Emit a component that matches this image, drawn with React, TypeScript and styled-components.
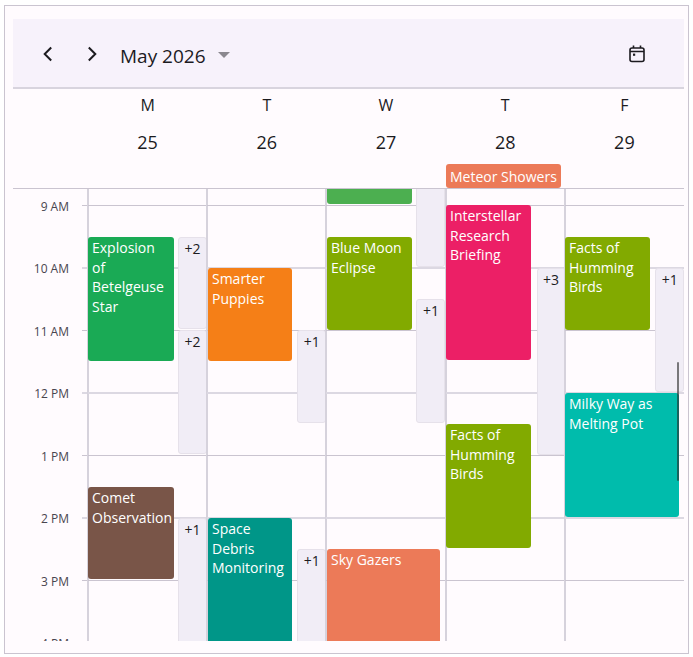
import React from 'react';
import styled, { createGlobalStyle } from 'styled-components';

const FONT = `'Open Sans', 'Noto Sans', sans-serif`;
const HOUR = 62.45;
const FIRST_HOUR = 16; // the 9 AM line sits 16px under the top of the scrolled view

const GlobalStyle = createGlobalStyle`
    html, body {
        margin: 0;
        padding: 0;
        background: #ffffff;
        font-family: ${FONT};
    }
`;

const Frame = styled.div`
    box-sizing: border-box;
    width: 685px;
    height: 649px;
    margin: 5px 0 0 4px;
    padding: 13px 4px 12px 8px;
    border: 1px solid #cac4d0;
    background: #fffbfe;
    display: flex;
    flex-direction: column;
`;

const Toolbar = styled.div`
    height: 68px;
    flex: none;
    display: flex;
    align-items: center;
    padding: 0 39px 0 26px;
    background: #f7f2fb;
    border-bottom: 2px solid #d8d4de;
    color: #1c1b1f;
`;

const NavButton = styled.button`
    width: 18px;
    height: 24px;
    margin: 2px 26px 0 0;
    padding: 0;
    border: none;
    background: none;
    color: inherit;
    display: flex;
    align-items: center;
    justify-content: center;
    &:last-of-type { margin-right: 19px; }
`;

const MonthLabel = styled.span`
    margin-top: 6px;
    font-size: 19px;
    line-height: 24px;
`;

const Caret = styled.span`
    width: 0;
    height: 0;
    margin: 3px 0 0 12px;
    border-left: 6px solid transparent;
    border-right: 6px solid transparent;
    border-top: 6px solid #8b888f;
`;

const TodayButton = styled.span`
    margin: 1px 0 0 auto;
    display: flex;
    color: #1c1b1f;
`;

const DayHeader = styled.div`
    height: 99px;
    flex: none;
    display: grid;
    grid-template-columns: 75px repeat(5, 1fr);
    border-bottom: 1px solid #cac4d0;
    color: #1c1b1f;
`;

const DayCell = styled.div<{ $col: number }>`
    grid-column: ${p => p.$col};
    grid-row: 1;
    display: flex;
    flex-direction: column;
    align-items: center;
    padding-top: 5px;
`;

const DayLetter = styled.span`
    font-size: 16px;
    line-height: 22px;
`;

const DayNumber = styled.span`
    margin-top: 14px;
    font-size: 18px;
    line-height: 24px;
`;

const AllDayChip = styled.div`
    grid-column: 5;
    grid-row: 1;
    align-self: end;
    width: 115px;
    height: 24px;
    margin-left: 0.4px;
    box-sizing: border-box;
    padding-left: 4px;
    background: #ec7a58;
    border-radius: 3px;
    color: #fff;
    font-size: 14px;
    line-height: 25px;
    white-space: nowrap;
`;

const Body = styled.div`
    flex: 1;
    position: relative;
    overflow: hidden;
    display: grid;
    grid-template-columns: 75px repeat(5, 1fr);
`;

const TimeColumn = styled.div`
    position: relative;
`;

const TimeLabel = styled.span<{ $top: number }>`
    position: absolute;
    top: ${p => p.$top - 7}px;
    right: 19px;
    font-size: 12px;
    line-height: 18px;
    color: #49454f;
    white-space: nowrap;
`;

const HourTick = styled.i<{ $top: number; $thick: boolean }>`
    position: absolute;
    top: ${p => p.$top}px;
    right: 0;
    width: 6px;
    height: ${p => (p.$thick ? 2 : 1)}px;
    background: ${p => (p.$thick ? '#dcd8e2' : '#cac4d0')};
`;

const DayColumn = styled.div`
    position: relative;
    &::before {
        content: '';
        position: absolute;
        left: -1px;
        top: 0;
        bottom: 0;
        width: 2px;
        background: #d6d2dc;
    }
`;

const HourLine = styled.i<{ $top: number; $thick: boolean }>`
    position: absolute;
    left: 0;
    right: 0;
    top: ${p => p.$top}px;
    height: ${p => (p.$thick ? 2 : 1)}px;
    background: ${p => (p.$thick ? '#dcd8e2' : '#cac4d0')};
`;

const Appointment = styled.div<{ $left: number; $top: number; $width: number; $height: number; $color: string }>`
    position: absolute;
    left: ${p => p.$left}px;
    top: ${p => p.$top}px;
    width: ${p => p.$width}px;
    height: ${p => p.$height}px;
    box-sizing: border-box;
    padding: 1px 0 0 4px;
    background: ${p => p.$color};
    border-radius: 3px;
    color: #fff;
    font-size: 14px;
    line-height: 19.6px;
    white-space: pre-line;
`;

const MoreBadge = styled.div<{ $left: number; $top: number; $height: number }>`
    position: absolute;
    left: ${p => p.$left}px;
    top: ${p => p.$top}px;
    width: 29px;
    height: ${p => p.$height}px;
    box-sizing: border-box;
    padding-top: 2px;
    background: #f1edf6;
    border: 1px solid #e6e1ea;
    border-radius: 3px;
    color: #1c1b1f;
    font-size: 14px;
    line-height: 18px;
    text-align: center;
`;

const ScrollThumb = styled.div`
    position: absolute;
    right: 5px;
    top: 173px;
    width: 2px;
    height: 119px;
    background: rgba(40, 40, 40, 0.6);
    border-radius: 1px;
`;

const ChevronLeft = () => (
    <svg width="18" height="18" viewBox="0 0 18 18" fill="none" stroke="currentColor" strokeWidth="2">
        <path d="M12.2 2.5 5.7 9l6.5 6.5" />
    </svg>
);

const ChevronRight = () => (
    <svg width="18" height="18" viewBox="0 0 18 18" fill="none" stroke="currentColor" strokeWidth="2">
        <path d="M5.8 2.5 12.3 9l-6.500 6.500" />
    </svg>
);

const CalendarIcon = () => (
    <svg width="16" height="18" viewBox="0 0 16 18" fill="none" stroke="currentColor" strokeWidth="1.6">
        <rect x="1" y="3" width="14" height="13.5" rx="2" />
        <path d="M1 6.500h14M4.500 0.500v2.500M11.500 0.500v2.500" />
        <rect x="4" y="8.600" width="2.200" height="2.200" fill="currentColor" stroke="none" />
    </svg>
);

type Item =
    | { kind: 'event'; title: string; left: number; top: number; width: number; height: number; color: string }
    | { kind: 'more'; label?: string; left: number; top: number; height: number };

const days: { letter: string; number: number; items: Item[] }[] = [
    {
        letter: 'M',
        number: 25,
        items: [
            { kind: 'event', title: 'Explosion\nof\nBetelgeuse\nStar', left: 0, top: 48, width: 85.5, height: 123.5, color: '#1aaa55' },
            { kind: 'more', label: '+2', left: 90, top: 48, height: 92 },
            { kind: 'more', label: '+2', left: 90, top: 141, height: 124 },
            { kind: 'event', title: 'Comet\nObservation', left: 0, top: 298, width: 85.5, height: 92, color: '#795548' },
            { kind: 'more', label: '+1', left: 90, top: 329, height: 130 },
        ],
    },
    {
        letter: 'T',
        number: 26,
        items: [
            { kind: 'event', title: 'Smarter\nPuppies', left: 0.8, top: 79, width: 84, height: 92.5, color: '#f57f17' },
            { kind: 'more', label: '+1', left: 90, top: 141, height: 93 },
            { kind: 'event', title: 'Space\nDebris\nMonitoring', left: 0.8, top: 329, width: 84, height: 130, color: '#009688' },
            { kind: 'more', label: '+1', left: 90, top: 360, height: 100 },
        ],
    },
    {
        letter: 'W',
        number: 27,
        items: [
            { kind: 'event', title: '', left: 0.6, top: -41, width: 85, height: 56, color: '#4caf50' },
            { kind: 'more', left: 90, top: -20, height: 98 },
            { kind: 'event', title: 'Blue Moon\nEclipse', left: 0.6, top: 48, width: 85, height: 92.5, color: '#82aa00' },
            { kind: 'more', label: '+1', left: 90, top: 110, height: 124 },
            { kind: 'event', title: 'Sky Gazers', left: 0.6, top: 360, width: 113.5, height: 100, color: '#ec7a58' },
        ],
    },
    {
        letter: 'T',
        number: 28,
        items: [
            { kind: 'event', title: 'Interstellar\nResearch\nBriefing', left: 0.4, top: 16, width: 85, height: 155, color: '#ec1f66' },
            { kind: 'more', label: '+3', left: 91, top: 79, height: 187 },
            { kind: 'event', title: 'Facts of\nHumming\nBirds', left: 0.4, top: 235, width: 85, height: 123.5, color: '#82aa00' },
        ],
    },
    {
        letter: 'F',
        number: 29,
        items: [
            { kind: 'event', title: 'Facts of\nHumming\nBirds', left: 0.2, top: 48, width: 85, height: 92.5, color: '#82aa00' },
            { kind: 'more', label: '+1', left: 90.5, top: 79, height: 124 },
            { kind: 'event', title: 'Milky Way as\nMelting Pot', left: 0.2, top: 204, width: 114, height: 124, color: '#00bcac' },
        ],
    },
];

const hours = ['9 AM', '10 AM', '11 AM', '12 PM', '1 PM', '2 PM', '3 PM', '4 PM'];
const hourTop = (i: number) => Math.round(FIRST_HOUR + i * HOUR);

export default function App() {
    return (
        <>
            <GlobalStyle />
            <Frame>
                <Toolbar>
                    <NavButton aria-label="Previous"><ChevronLeft /></NavButton>
                    <NavButton aria-label="Next"><ChevronRight /></NavButton>
                    <MonthLabel>May 2026</MonthLabel>
                    <Caret />
                    <TodayButton><CalendarIcon /></TodayButton>
                </Toolbar>
                <DayHeader>
                    {days.map((day, i) => (
                        <DayCell key={day.number} $col={i + 2}>
                            <DayLetter>{day.letter}</DayLetter>
                            <DayNumber>{day.number}</DayNumber>
                        </DayCell>
                    ))}
                    <AllDayChip>Meteor Showers</AllDayChip>
                </DayHeader>
                <Body>
                    <TimeColumn>
                        {hours.map((label, i) => (
                            <React.Fragment key={label}>
                                <TimeLabel $top={hourTop(i)}>{label}</TimeLabel>
                                <HourTick $top={hourTop(i)} $thick={i % 2 === 1} />
                            </React.Fragment>
                        ))}
                    </TimeColumn>
                    {days.map(day => (
                        <DayColumn key={day.number}>
                            {hours.map((label, i) => (
                                <HourLine key={label} $top={hourTop(i)} $thick={i % 2 === 1} />
                            ))}
                            {day.items.map((item, i) =>
                                item.kind === 'event' ? (
                                    <Appointment
                                        key={i}
                                        $left={item.left}
                                        $top={item.top}
                                        $width={item.width}
                                        $height={item.height}
                                        $color={item.color}
                                    >
                                        {item.title}
                                    </Appointment>
                                ) : (
                                    <MoreBadge key={i} $left={item.left} $top={item.top} $height={item.height}>
                                        {item.label}
                                    </MoreBadge>
                                ),
                            )}
                        </DayColumn>
                    ))}
                    <ScrollThumb />
                </Body>
            </Frame>
        </>
    );
}
